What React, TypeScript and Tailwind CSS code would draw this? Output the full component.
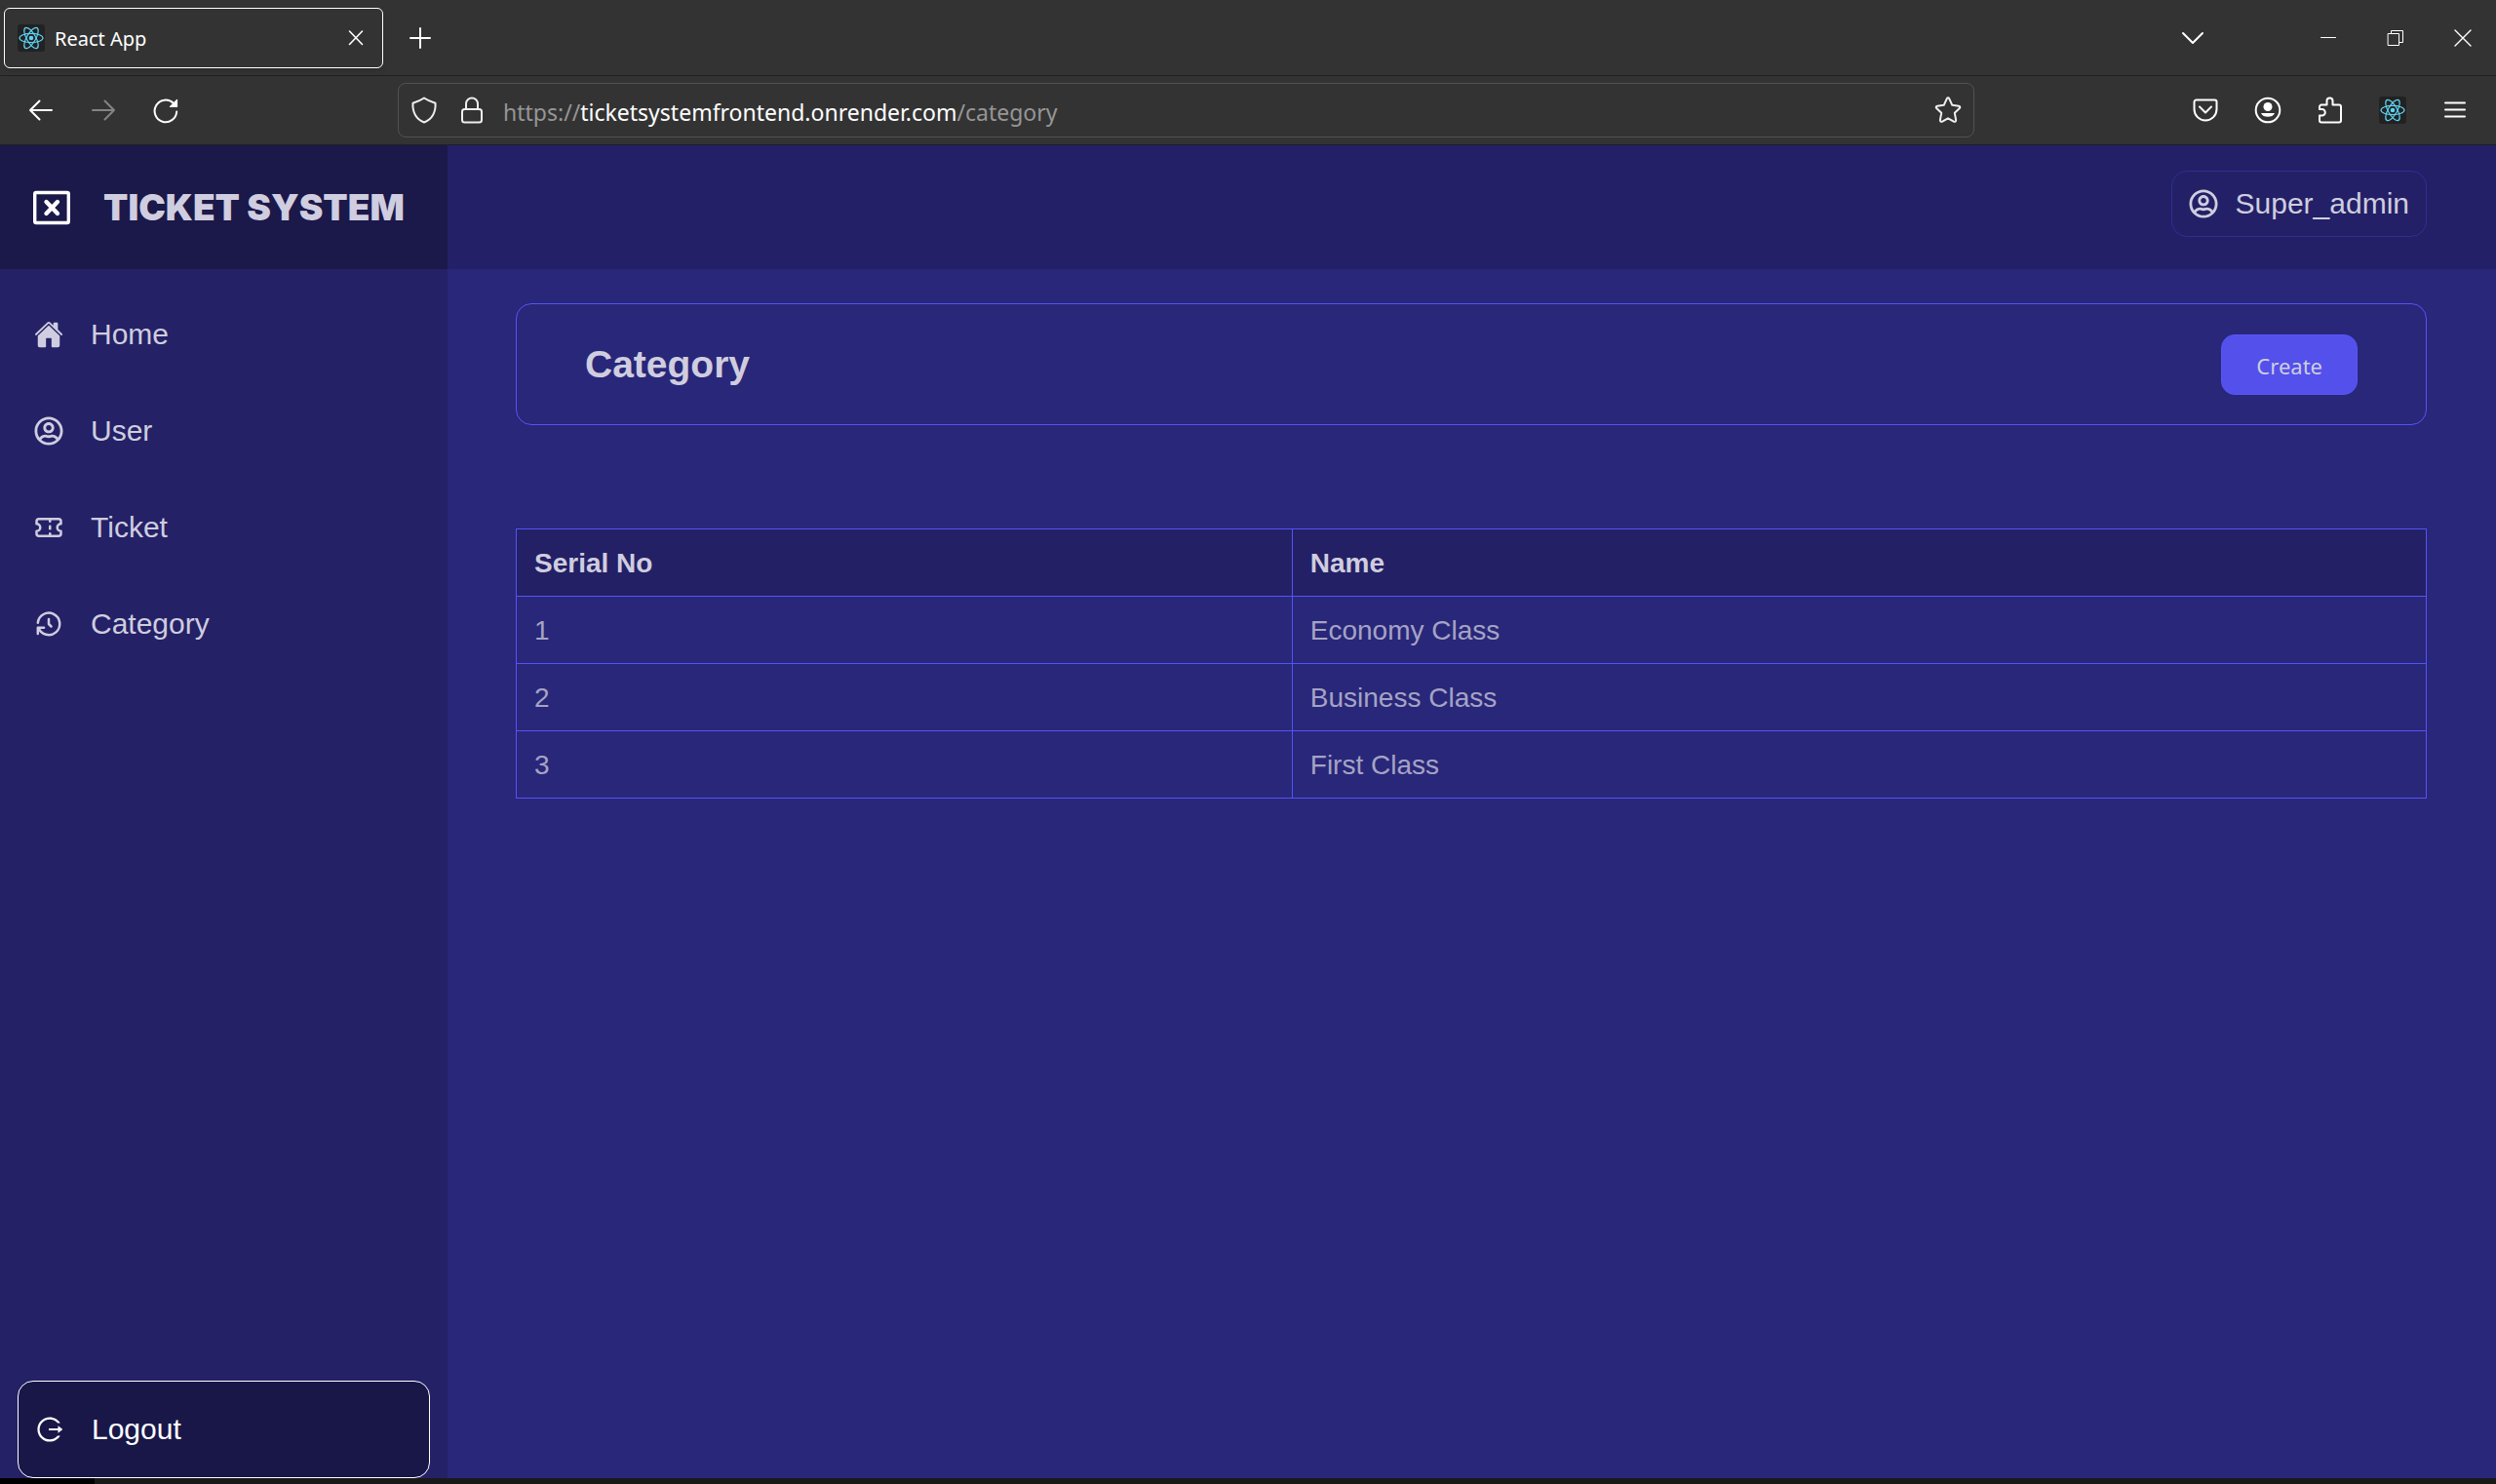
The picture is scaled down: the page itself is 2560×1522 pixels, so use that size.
import React from "react";
import { IoHome } from "react-icons/io5";
import { FaRegUserCircle } from "react-icons/fa";
import { LuTicket } from "react-icons/lu";
import { TbHistory } from "react-icons/tb";
import { AiOutlineLogout } from "react-icons/ai";

type IconProps = { className?: string };

function Glyph({
  className = "size-7",
  box = 28,
  width = 2,
  children,
}: {
  className?: string;
  box?: number;
  width?: number;
  children: React.ReactNode;
}) {
  return (
    <svg
      className={className}
      viewBox={`0 0 ${box} ${box}`}
      fill="none"
      stroke="currentColor"
      strokeWidth={width}
      strokeLinecap="round"
      strokeLinejoin="round"
      aria-hidden="true"
    >
      {children}
    </svg>
  );
}

function ReactLogo({ className = "size-7" }: IconProps) {
  return (
    <svg className={className} viewBox="0 0 28 28" fill="none" stroke="#5fd3f3" strokeWidth="1.2" aria-hidden="true">
      <rect width="28" height="28" rx="3" fill="#222222" stroke="none" />
      <ellipse cx="14" cy="14" rx="12" ry="4.6" />
      <ellipse cx="14" cy="14" rx="12" ry="4.6" transform="rotate(60 14 14)" />
      <ellipse cx="14" cy="14" rx="12" ry="4.6" transform="rotate(120 14 14)" />
      <circle cx="14" cy="14" r="2.3" fill="#5fd3f3" stroke="none" />
    </svg>
  );
}

function IconButton({ label, className = "", children }: { label: string; className?: string; children: React.ReactNode }) {
  return (
    <button type="button" aria-label={label} className={`flex shrink-0 items-center justify-center ${className}`}>
      {children}
    </button>
  );
}

function TabStrip() {
  return (
    <div className="flex h-[77px] items-center pl-1">
      <div className="flex h-[62px] w-[389px] items-center rounded-md border border-white pr-[17px] pl-[13px] shadow-md">
        <ReactLogo />
        <span className="ml-[10px] flex-1 pt-[3px] text-xl">React App</span>
        <IconButton label="Close tab" className="size-5">
          <Glyph className="size-5" box={20} width={1.6}>
            <path d="M3.5 3 16.5 16.5M16.5 3 3.5 16.5" />
          </Glyph>
        </IconButton>
      </div>
      <IconButton label="New tab" className="ml-6">
        <Glyph>
          <path d="M14 4v20M4 14h20" />
        </Glyph>
      </IconButton>
      <div className="ml-auto flex items-center">
        <IconButton label="List all tabs" className="mr-[111px]">
          <Glyph>
            <path d="m4 9 10 10L24 9" />
          </Glyph>
        </IconButton>
        <IconButton label="Minimize" className="mr-[41px]">
          <Glyph width={1}>
            <path d="M6.5 13.5h15" />
          </Glyph>
        </IconButton>
        <IconButton label="Restore" className="mr-[41px]">
          <Glyph width={1}>
            <path d="M6.5 9.5h11v12h-11zM9.5 9.5v-3h12v12h-4" strokeLinejoin="miter" />
          </Glyph>
        </IconButton>
        <IconButton label="Close window" className="mr-5">
          <Glyph width={1.4}>
            <path d="m6 6 16 16M22 6 6 22" />
          </Glyph>
        </IconButton>
      </div>
    </div>
  );
}

function Toolbar() {
  return (
    <div className="flex h-[72px] items-center border-y border-[#1f1f1f]">
      <div className="flex w-[408px] shrink-0 items-center gap-9 pl-7">
        <IconButton label="Back">
          <Glyph>
            <path d="M25 14H3M12.500 4.500 3 14l9.500 9.500" />
          </Glyph>
        </IconButton>
        <IconButton label="Forward" className="text-[#848484]">
          <Glyph>
            <path d="M3 14h22M15.500 4.500 25 14l-9.500 9.500" />
          </Glyph>
        </IconButton>
        <IconButton label="Reload">
          <Glyph>
            <path d="M25.200 15.500A11.300 11.300 0 1 1 22 7" />
            <path d="M25.500 3.500v7h-7z" fill="currentColor" strokeWidth="1.200" />
          </Glyph>
        </IconButton>
      </div>

      <div className="flex h-14 min-w-0 flex-1 items-center rounded-lg border border-[#525252] pr-3 pl-3 text-[#efefef]">
        <IconButton label="Tracking protection">
          <Glyph>
            <path d="M14 1.500c3.500 2.500 7.500 4 11.500 5.200C26.300 16 22 23.500 14 26.500 6 23.500 1.700 16 2.500 6.700 6.500 5.500 10.500 4 14 1.500z" />
          </Glyph>
        </IconButton>
        <IconButton label="Site information" className="ml-[21px]">
          <Glyph>
            <rect x="4" y="13" width="20" height="13.500" rx="2.500" />
            <path d="M8 13V7.500a6 6 0 0 1 12 0V13" />
          </Glyph>
        </IconButton>
        <div role="textbox" aria-label="Address" className="ml-[18px] flex-1 pt-[3px] text-[23px] leading-8 text-[#969696]">
          https://<span className="text-white">ticketsystemfrontend.onrender.com</span>/category
        </div>
        <IconButton label="Bookmark this page">
          <Glyph>
            <path d="M12.700 2.300q1.300-2 2.600 0L18.300 8.800l6.600.9q2.200.6.900 2.400l-5 4.700 1.300 7.400q-.1 2.200-2.200 1.500L14 22.300l-5.900 3.400q-2.100.7-2.200-1.500l1.300-7.400-5-4.700q-1.300-1.800.9-2.400l6.600-.9z" />
          </Glyph>
        </IconButton>
      </div>

      <div className="flex w-[535px] shrink-0 items-center justify-end gap-9 pr-7">
        <IconButton label="Save to Pocket">
          <Glyph>
            <path d="M4.500 3.500h19a2 2 0 0 1 2 2V13a11.500 11.500 0 0 1-23 0V5.500a2 2 0 0 1 2-2z" />
            <path d="m8 10.500 6 6 6-6" />
          </Glyph>
        </IconButton>
        <IconButton label="Account">
          <Glyph>
            <circle cx="14" cy="14" r="12.300" />
            <circle cx="14" cy="10.500" r="4.500" fill="currentColor" stroke="none" />
            <path d="M7 17h14a7.500 6 0 0 1-14 0z" fill="currentColor" stroke="none" />
          </Glyph>
        </IconButton>
        <IconButton label="Extensions">
          <Glyph>
            <path d="M5 8.500h5.500V4.500a3 3 0 0 1 6 0v4H23a2 2 0 0 1 2 2V24.500a2 2 0 0 1-2 2H5a2 2 0 0 1-2-2v-5h2.500a3.300 3.300 0 0 0 0-6.600H3v-2.400a2 2 0 0 1 2-2z" />
          </Glyph>
        </IconButton>
        <IconButton label="React Developer Tools">
          <ReactLogo />
        </IconButton>
        <IconButton label="Open application menu">
          <Glyph>
            <path d="M4 6.500h20M4 13.500h20M4 20.500h20" />
          </Glyph>
        </IconButton>
      </div>
    </div>
  );
}

function BrandMark() {
  return (
    <svg className="h-9 w-[38px] shrink-0 text-white" viewBox="0 0 38 36" fill="none" stroke="currentColor" aria-hidden="true">
      <rect x="1.700" y="2.500" width="34.600" height="31" rx="1.500" strokeWidth="3.400" />
      <path d="M13.500 12 25 24M25 12 13.500 24" strokeWidth="4.400" strokeLinecap="round" />
    </svg>
  );
}

const links = [
  { label: "Home", Icon: IoHome },
  { label: "User", Icon: FaRegUserCircle },
  { label: "Ticket", Icon: LuTicket },
  { label: "Category", Icon: TbHistory },
];

function Sidebar() {
  return (
    <aside className="flex w-[459px] shrink-0 flex-col bg-[#242167]">
      <div className="flex h-[127px] items-center gap-[34px] bg-[#1b184a] pl-[34px]">
        <BrandMark />
        <span className="font-['Inter',sans-serif] text-[37px] font-black whitespace-nowrap text-[#cfcddf]">TICKET SYSTEM</span>
      </div>
      <nav className="flex flex-col pt-[17px]">
        {links.map(({ label, Icon }) => (
          <a key={label} href={`#${label.toLowerCase()}`} className="flex h-[99px] items-center gap-7 px-[35px]">
            <Icon size={30} aria-hidden="true" />
            {label}
          </a>
        ))}
      </nav>
      <button
        type="button"
        className="mx-[18px] mt-auto flex h-[100px] items-center gap-7 rounded-2xl border border-white bg-[#181748] px-[17px] text-white"
      >
        <AiOutlineLogout size={30} aria-hidden="true" />
        Logout
      </button>
    </aside>
  );
}

const rows = ["Economy Class", "Business Class", "First Class"];
const cell = "h-[69px] border border-[#5553f5] px-[18px] pt-[2px] text-left";

function CategoryPage() {
  return (
    <main className="flex-1 pt-[35px] pr-[71px] pl-[70px]">
      <section className="flex h-[125px] items-center justify-between rounded-2xl border border-[#5553f5] px-[70px]">
        <h1 className="text-[39px] font-bold">Category</h1>
        <button
          type="button"
          className="h-[62px] rounded-[14px] border border-[#5855f5] bg-[#5350eb] px-[35px] pt-[2px] font-['Noto_Sans',sans-serif] text-[22px] text-[#cfcddf]"
        >
          Create
        </button>
      </section>
      <table className="mt-[106px] w-full border-collapse text-[28px] leading-8">
        <thead>
          <tr className="bg-[#232066]">
            <th scope="col" className={cell}>Serial No</th>
            <th scope="col" className={cell}>Name</th>
          </tr>
        </thead>
        <tbody className="text-[#a5a3c5]">
          {rows.map((name, i) => (
            <tr key={name}>
              <td className={cell}>{i + 1}</td>
              <td className={cell}>{name}</td>
            </tr>
          ))}
        </tbody>
      </table>
    </main>
  );
}

export default function App() {
  return (
    <div className="flex min-h-screen flex-col bg-[#333333]">
      <header className="font-['Noto_Sans',sans-serif] text-white">
        <TabStrip />
        <Toolbar />
      </header>
      <div className="flex flex-1 bg-[#292779] font-['Liberation_Sans',Arial,sans-serif] text-[30px] leading-9 text-[#cfcddf]">
        <Sidebar />
        <div className="flex min-w-0 flex-1 flex-col">
          <div className="flex h-[127px] items-start justify-end bg-[#232067] pt-[26px] pr-[71px]">
            <button type="button" className="flex h-[68px] items-center gap-[18px] rounded-2xl border border-[#302e90] px-[17px]">
              <FaRegUserCircle size={30} aria-hidden="true" />
              Super_admin
            </button>
          </div>
          <CategoryPage />
        </div>
      </div>
      <div className="flex h-[6px] bg-[#191919]">
        <div className="w-[97px] bg-black" />
      </div>
    </div>
  );
}
